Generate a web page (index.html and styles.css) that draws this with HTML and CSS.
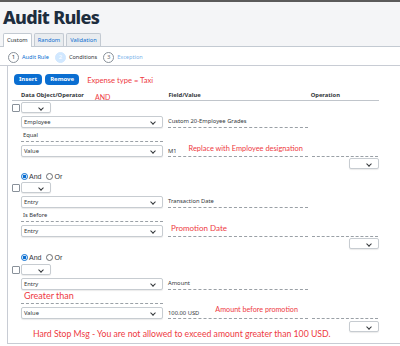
FILE: index.html
```html
<!DOCTYPE html>
<html>
<head>
<meta charset="utf-8">
<link rel="stylesheet" href="styles.css">
</head>
<body>
<div class="page">
  <header class="head">
    <h1 class="title">Audit Rules</h1>
    <div class="tabs">
      <div class="tab active">Custom</div>
      <div class="tab">Random</div>
      <div class="tab">Validation</div>
    </div>
  </header>
  <div class="steps">
    <div class="step done"><span class="circle">1</span><span class="slabel">Audit Rule</span></div>
    <div class="step cur"><span class="circle">2</span><span class="slabel">Conditions</span></div>
    <div class="step next"><span class="circle">3</span><span class="slabel">Exception</span></div>
  </div>
  <div class="box">
    <div class="toolbar">
      <button class="btn">Insert</button>
      <button class="btn">Remove</button>
      <span class="note n-taxi">Expense type = Taxi</span>
    </div>
    <div class="thead">
      <span class="th th1">Data Object/Operator</span>
      <span class="note n-and">AND</span>
      <span class="th th2">Field/Value</span>
      <span class="th th3">Operation</span>
    </div>

    <div class="group">
      <div class="lead"><span class="chk"></span><span class="sel small"><span class="chev"></span></span></div>
      <div class="line"><span class="sel wide">Employee<span class="chev"></span></span><span class="field">Custom 20-Employee Grades</span></div>
      <div class="opline"><span class="optext">Equal</span></div>
      <div class="line"><span class="sel wide">Value<span class="chev"></span></span><span class="field"><span class="val">M1</span><span class="note n-repl">Replace with Employee designation</span></span><span class="field short"></span></div>
      <div class="opsel"><span class="sel small"><span class="chev"></span></span></div>
    </div>

    <div class="radios"><span class="radio on"></span><span class="rlabel">And</span><span class="radio"></span><span class="rlabel">Or</span></div>
    <div class="group">
      <div class="lead"><span class="chk"></span><span class="sel small"><span class="chev"></span></span></div>
      <div class="line"><span class="sel wide">Entry<span class="chev"></span></span><span class="field">Transaction Date</span></div>
      <div class="opline"><span class="optext">Is Before</span></div>
      <div class="line"><span class="sel wide">Entry<span class="chev"></span></span><span class="field"><span class="note n-promo">Promotion Date</span></span><span class="field short"></span></div>
      <div class="opsel"><span class="sel small"><span class="chev"></span></span></div>
    </div>

    <div class="radios r3"><span class="radio on"></span><span class="rlabel">And</span><span class="radio"></span><span class="rlabel">Or</span></div>
    <div class="group">
      <div class="lead"><span class="chk"></span><span class="sel small"><span class="chev"></span></span></div>
      <div class="line"><span class="sel wide">Entry<span class="chev"></span></span><span class="field">Amount</span></div>
      <div class="opline"><span class="optext note n-gt">Greater than</span></div>
      <div class="line"><span class="sel wide">Value<span class="chev"></span></span><span class="field"><span class="val">100.00 USD</span><span class="note n-amt">Amount before promotion</span></span><span class="field short"></span></div>
      <div class="lastrow"><span class="note n-hard">Hard Stop Msg - You are not allowed to exceed amount greater than 100 USD.</span><span class="sel small"><span class="chev"></span></span></div>
    </div>
  </div>
</div>
</body>
</html>
```

FILE: styles.css
```css
* { box-sizing: border-box; }
html, body { margin: 0; padding: 0; }
body {
  width: 400px;
  height: 346px;
  overflow: hidden;
  background: #fff;
  font-family: "Noto Sans", "Open Sans", sans-serif;
  color: #32363a;
}
.page { border-top: 2px solid #5b5b5b; }
.head {
  background: #f4f5f7;
  height: 45px;
  border-bottom: 1px solid #c3cad2;
  display: flex;
  flex-direction: column;
  justify-content: space-between;
  padding-left: 3px;
}
.title {
  margin: 3px 0 0 0;
  font-size: 18px;
  line-height: 24px;
  font-weight: 800;
  letter-spacing: -0.7px;
  color: #1d2d3e;
}
.tabs { display: flex; gap: 2px; margin-bottom: -1px; }
.tab {
  height: 13px;
  padding: 0 3px;
  font-size: 5.7px;
  line-height: 12px;
  color: #0a6ed1;
  background: #e9ecef;
  border: 1px solid #c3cad2;
  border-bottom: none;
  border-radius: 2px 2px 0 0;
}
.tab.active { background: #fff; color: #32363a; height: 14px; }
.steps {
  height: 19px;
  border-bottom: 1px solid #c8ccd4;
  display: flex;
  align-items: center;
  gap: 6px;
  padding-left: 8px;
  padding-top: 2px;
  font-size: 5.6px;
}
.step { display: flex; align-items: center; gap: 3px; }
.circle {
  width: 11px; height: 11px;
  border-radius: 50%;
  border: 1px solid #89919a;
  display: flex; align-items: center; justify-content: center;
  font-size: 6px;
  background: #fff;
  color: #32363a;
}
.done .slabel { color: #0a6ed1; }
.cur .circle { background: #d1e8ff; border-color: #d1e8ff; color: #fff; }
.cur .slabel { color: #32363a; }
.next .circle { color: #6a6d70; }
.next .slabel { color: #7db3ea; }
.box {
  margin-left: 7px;
  height: 278px;
  border-left: 1px solid #c8ccd4;
  border-bottom: 1px solid #c8ccd4;
  padding: 7px 0 0 4px;
}
.toolbar { display: flex; align-items: center; gap: 3px; height: 12px; padding-left: 2px; }
.btn {
  height: 11px;
  padding: 0 5px;
  border: none;
  border-radius: 4px;
  background: #0a6ed1;
  color: #fff;
  font-family: "Noto Sans", sans-serif;
  font-size: 6px;
  font-weight: 700;
  line-height: 11px;
}
.note { color: #ee3a3f; font-family: Lato, "Open Sans", sans-serif; }
.n-taxi { font-size: 7.6px; margin-left: 5px; margin-top: 1px; }
.thead {
  margin-top: 3px;
  height: 13px;
  border-bottom: 1px solid #c0c5cb;
  width: 367px;
  display: flex;
  align-items: flex-start;
  font-size: 5.8px;
  font-weight: 700;
}
.th1 { margin-left: 9px; margin-top: 3px; }
.n-and { font-size: 7px; font-weight: 400; margin-left: 11px; margin-top: 5px; }
.th2 { margin-left: 58px; margin-top: 3px; }
.th3 { margin-left: 110px; margin-top: 3px; }
.group { display: flex; flex-direction: column; }
.lead { display: flex; align-items: center; height: 11px; margin-top: 1px; }
.chk {
  width: 8px; height: 8px;
  border: 1px solid #89919a;
  border-radius: 1px;
  margin-right: 1px;
  background: #fff;
}
.sel {
  position: relative;
  height: 11px;
  border: 1px solid #c7ccd1;
  border-radius: 2px;
  box-shadow: 0 1px 1px rgba(0,0,0,0.08);
  background: #fff;
  font-size: 5.8px;
  line-height: 10px;
  padding-left: 2px;
  color: #32363a;
}
.sel.small { width: 30px; }
.sel.wide { width: 142px; height: 12px; line-height: 11px; }
.chev {
  position: absolute;
  right: 7px;
  top: 3px;
  width: 4px; height: 4px;
  border-right: 1.2px solid #32363a;
  border-bottom: 1.2px solid #32363a;
  transform: rotate(45deg);
}
.line { display: flex; align-items: flex-end; height: 12px; margin-top: 3px; padding-left: 9px; gap: 5px; }
.field {
  width: 140px;
  height: 12px;
  border-bottom: 1px dashed #9aa0a6;
  font-size: 5.8px;
  line-height: 11px;
  display: flex;
  align-items: flex-end;
  white-space: nowrap;
}
.field.short { width: 66px; margin-left: -1px; }
.val { line-height: 9px; margin-right: 12px; }
.n-repl { font-size: 7.4px; line-height: 12px; margin-bottom: 1px; }
.n-promo { font-size: 8px; line-height: 12px; margin-left: 3px; margin-bottom: 2px; }
.n-amt { font-size: 7.2px; line-height: 12px; margin-left: 4px; margin-bottom: 2px; }
.opline {
  margin-left: 9px;
  width: 142px;
  height: 14px;
  border-bottom: 1px dashed #9aa0a6;
  font-size: 5.8px;
  display: flex;
  align-items: flex-end;
  padding-left: 2px;
  padding-bottom: 2px;
}
.optext.n-gt { font-size: 9px; line-height: 10px; padding-left: 1px; }
.opsel { display: flex; justify-content: flex-end; width: 367px; margin-top: 1px; }
.radios { display: flex; align-items: center; height: 10px; margin-top: 2px; padding-left: 9px; font-size: 7px; font-family: "Liberation Sans", sans-serif; }
.radios.r3 { margin-top: 3px; height: 11px; }
.radio {
  width: 7px; height: 7px;
  border-radius: 50%;
  border: 1px solid #6a6d70;
  background: #fff;
}
.radio.on { border-color: #0a6ed1; background: radial-gradient(circle, #0a6ed1 50%, #fff 58%); }
.rlabel { margin-left: 1px; margin-right: 5px; }
.lastrow { display: flex; align-items: flex-start; width: 367px; margin-top: 2px; }
.n-hard { font-size: 8.7px; margin-left: 21px; margin-top: 7px; flex: 1; }
```
